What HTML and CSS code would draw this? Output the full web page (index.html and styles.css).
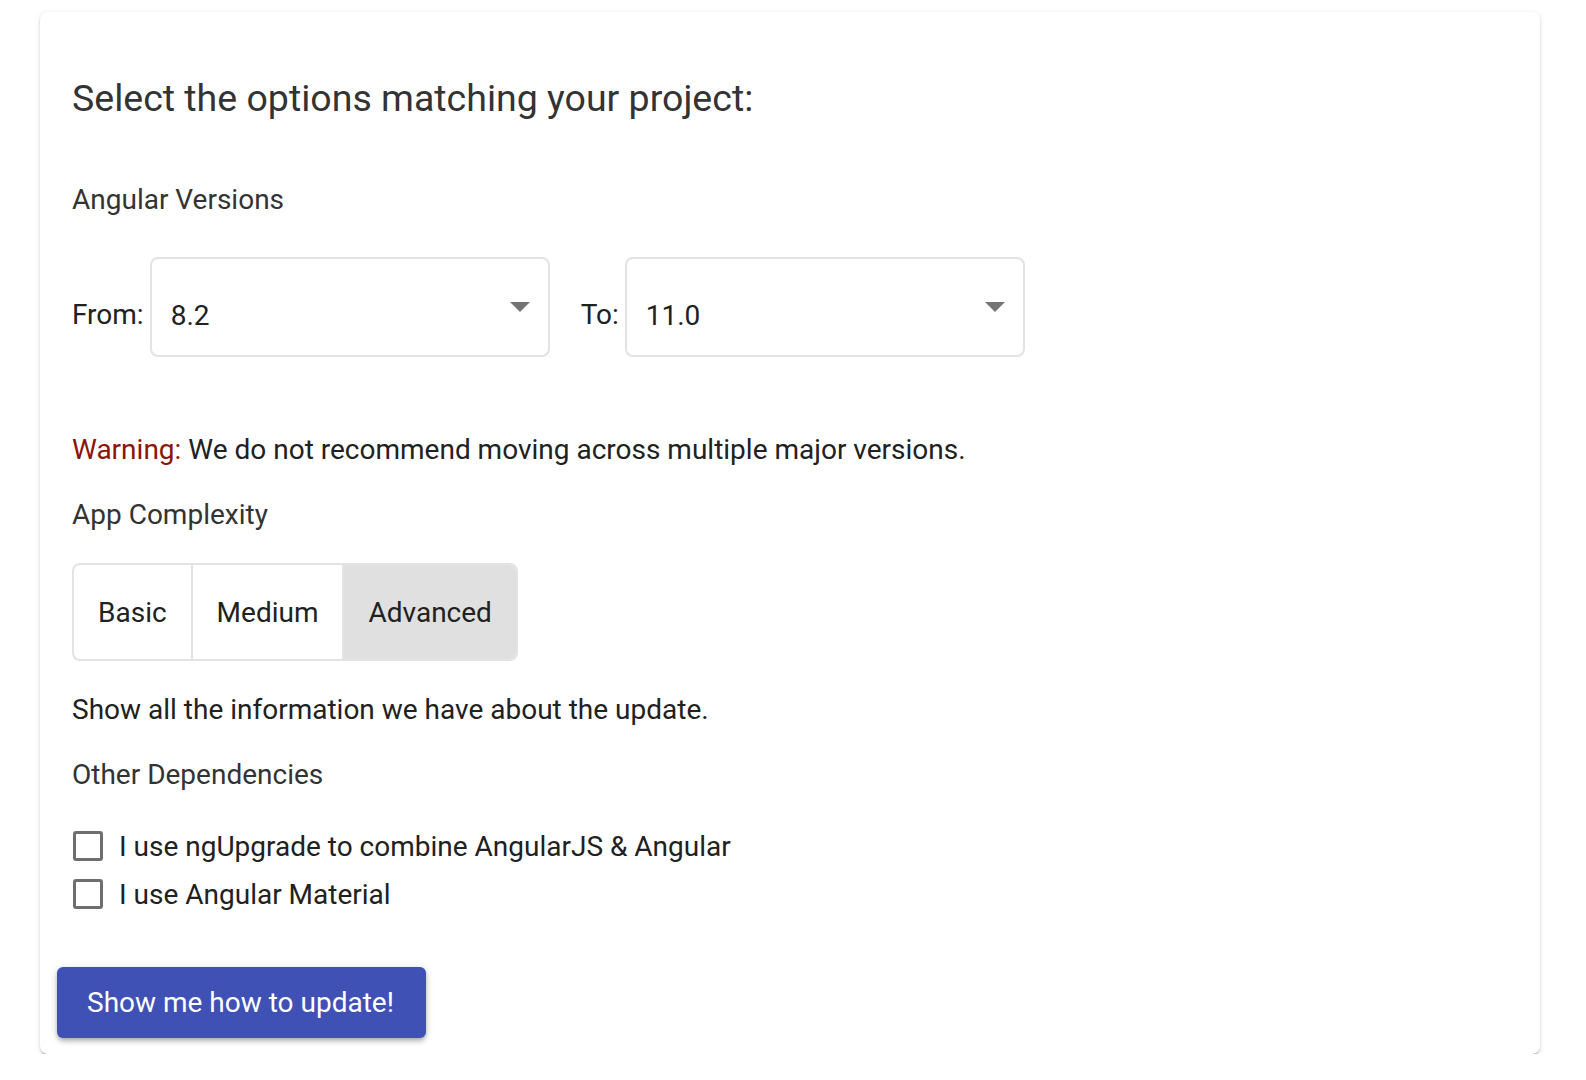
FILE: index.html
```
<!DOCTYPE html>
<html>
<head>
<meta charset="utf-8">
<link rel="stylesheet" href="styles.css">
</head>
<body>
<div class="card">
  <h2 class="title">Select the options matching your project:</h2>
  <h3 class="section first">Angular Versions</h3>
  <div class="versions">
    <span class="vlabel">From:</span>
    <div class="select"><span class="value">8.2</span><span class="arrow"></span></div>
    <span class="vlabel to">To:</span>
    <div class="select"><span class="value">11.0</span><span class="arrow"></span></div>
  </div>
  <p class="warning"><span class="warn">Warning:</span> We do not recommend moving across multiple major versions.</p>
  <h3 class="section">App Complexity</h3>
  <div class="toggle">
    <div class="tbtn">Basic</div>
    <div class="tbtn">Medium</div>
    <div class="tbtn active">Advanced</div>
  </div>
  <p class="desc">Show all the information we have about the update.</p>
  <h3 class="section">Other Dependencies</h3>
  <div class="checks">
    <label class="check"><span class="box"></span><span class="ctext">I use ngUpgrade to combine AngularJS &amp; Angular</span></label>
    <label class="check"><span class="box"></span><span class="ctext">I use Angular Material</span></label>
  </div>
  <button class="cta">Show me how to update!</button>
</div>
</body>
</html>
```
FILE: styles.css
```
html, body {
  margin: 0;
  padding: 0;
  background: #ffffff;
}
body {
  font-family: Roboto, "Liberation Sans", Arial, sans-serif;
  color: #212121;
  padding: 12px 0 0 40px;
}
.card {
  box-sizing: border-box;
  width: 1500px;
  height: 1042px;
  background: #fff;
  border-radius: 8px;
  box-shadow: 0 3px 1px -2px rgba(0,0,0,.2), 0 2px 2px 0 rgba(0,0,0,.14), 0 1px 5px 0 rgba(0,0,0,.12);
  padding: 66px 32px 16px 32px;
  display: flex;
  flex-direction: column;
  align-items: flex-start;
}
.title {
  margin: 0;
  font-size: 37.5px;
  line-height: 40px;
  font-weight: 400;
  color: #333;
}
.section {
  margin: 34px 0 0 0;
  font-size: 28px;
  line-height: 30px;
  font-weight: 400;
  color: #333;
}
.section.first {
  margin-top: 67px;
}
.versions {
  margin-top: 42px;
  display: flex;
  align-items: center;
}
.vlabel {
  font-size: 28px;
  color: #212121;
  margin-right: 6px;
  padding-top: 14px;
}
.vlabel.to {
  margin-left: 31px;
}
.select {
  box-sizing: border-box;
  width: 400px;
  height: 100px;
  border: 2px solid #e3e3e3;
  border-radius: 8px;
  display: flex;
  align-items: center;
  justify-content: space-between;
  padding: 16px 18px 0 19px;
}
.value {
  font-size: 28px;
  color: #212121;
}
.arrow {
  width: 0;
  height: 0;
  border-left: 10px solid transparent;
  border-right: 10px solid transparent;
  border-top: 10px solid #757575;
  margin-bottom: 16px;
}
.warning {
  margin: 77px 0 0 0;
  font-size: 28px;
  line-height: 32px;
  color: #212121;
}
.warn {
  color: #8b1508;
}
.toggle {
  margin-top: 33px;
  display: flex;
  border: 2px solid #e3e3e3;
  border-radius: 8px;
  overflow: hidden;
  height: 98px;
  box-sizing: border-box;
}
.tbtn {
  display: flex;
  align-items: center;
  padding: 0 24px;
  font-size: 28px;
  color: #212121;
  border-left: 2px solid #e3e3e3;
}
.tbtn:first-child {
  border-left: none;
}
.tbtn.active {
  background: #e0e0e0;
}
.desc {
  margin: 33px 0 0 0;
  font-size: 28px;
  line-height: 32px;
  color: #212121;
}
.checks {
  margin-top: 32px;
  display: flex;
  flex-direction: column;
}
.check {
  height: 48px;
  display: flex;
  align-items: center;
}
.box {
  box-sizing: border-box;
  width: 30px;
  height: 30px;
  border: 3px solid #6e6e6e;
  border-radius: 3px;
  margin: 0 16px 0 1px;
}
.ctext {
  font-size: 28px;
  color: #212121;
}
.cta {
  margin: 49px 0 0 -15px;
  height: 71px;
  width: 369px;
  border: none;
  border-radius: 6px;
  background: #3f51b5;
  color: #fff;
  font-family: Roboto, "Liberation Sans", Arial, sans-serif;
  font-size: 28px;
  text-align: left;
  padding: 0 0 0 30px;
  box-shadow: 0 2px 4px -1px rgba(0,0,0,.2), 0 4px 5px 0 rgba(0,0,0,.14), 0 1px 10px 0 rgba(0,0,0,.12);
}
```
